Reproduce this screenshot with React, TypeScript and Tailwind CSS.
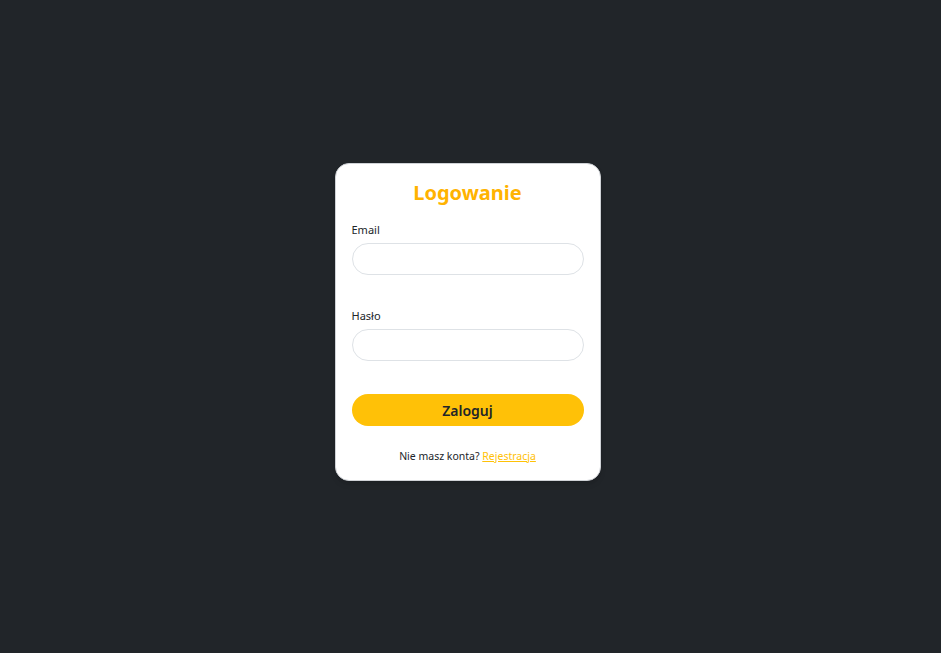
export default function App() {
  return (
    <div className="min-h-screen w-full bg-[#212529] flex items-center justify-center font-['Noto_Sans',sans-serif]">
      <div className="w-[266px] bg-white border border-[#cfd2d6] rounded-[14px] shadow-md px-4 pt-[14px] pb-4 -mt-[9px] mr-[6px]">
        <h1 className="text-center text-[20px] leading-[30px] font-bold text-[#ffb300]">Logowanie</h1>

        <form className="mt-[14px]" onSubmit={(e) => e.preventDefault()}>
          <label className="block text-[11px] leading-[16px] text-[#212529]">Email</label>
          <input
            type="email"
            className="mt-[5px] block w-full h-8 rounded-full border border-[#dee2e6] px-3 text-[13px] outline-none"
          />

          <label className="block mt-[33px] text-[11px] leading-[16px] text-[#212529]">Hasło</label>
          <input
            type="password"
            className="mt-[5px] block w-full h-8 rounded-full border border-[#dee2e6] px-3 text-[13px] outline-none"
          />

          <button
            type="submit"
            className="mt-[33px] w-full h-8 rounded-full bg-[#ffc107] text-[14px] font-semibold text-[#212529]"
          >
            Zaloguj
          </button>
        </form>

        <p className="mt-[22px] text-center text-[10.5px] leading-[16px] text-[#212529]">
          Nie masz konta?{' '}
          <a href="#" className="text-[#ffc107] underline">
            Rejestracja
          </a>
        </p>
      </div>
    </div>
  );
}
